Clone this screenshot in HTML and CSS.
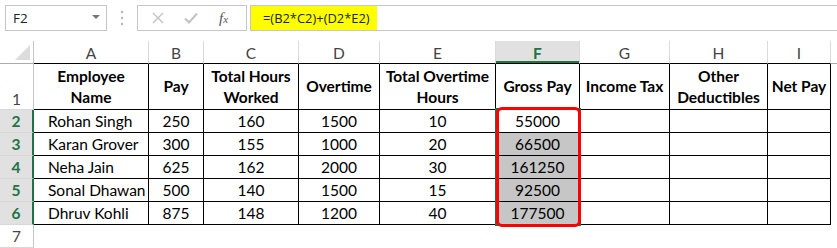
FILE: index.html
```html
<!DOCTYPE html>
<html>
<head>
<meta charset="utf-8">
<link rel="stylesheet" href="styles.css">
</head>
<body>
<div class="formula-bar">
  <div class="namebox"><span>F2</span><span class="caret"></span></div>
  <div class="grip">
    <svg width="4" height="16" viewBox="0 0 4 16"><circle cx="2" cy="2" r="1.2" fill="#b5b5b5"/><circle cx="2" cy="8" r="1.2" fill="#b5b5b5"/><circle cx="2" cy="14" r="1.2" fill="#b5b5b5"/></svg>
  </div>
  <div class="buttons">
    <svg class="btn-x" width="12" height="12" viewBox="0 0 12 12"><path d="M1 1 L11 11 M11 1 L1 11" stroke="#c2c2c2" stroke-width="1.4" fill="none"/></svg>
    <svg class="btn-ok" width="14" height="12" viewBox="0 0 14 12"><path d="M1 6.5 L5 10.5 L13 1.5" stroke="#c2c2c2" stroke-width="2" fill="none"/></svg>
    <span class="fx">f<span class="fx-x">x</span></span>
  </div>
  <div class="formula-input"><span class="formula">=(B2*C2)+(D2*E2)</span></div>
</div>

<div class="sheet-wrap">
<div class="sheet">
  <div class="corner"><span class="tri"></span></div>
  <div class="ch">A</div><div class="ch">B</div><div class="ch">C</div><div class="ch">D</div><div class="ch">E</div><div class="ch sel">F</div><div class="ch">G</div><div class="ch">H</div><div class="ch">I</div><div class="ch out"></div>

  <div class="rh r1">1</div>
  <div class="c h">Employee<br>Name</div><div class="c h">Pay</div><div class="c h">Total Hours<br>Worked</div><div class="c h">Overtime</div><div class="c h">Total Overtime<br>Hours</div><div class="c h">Gross Pay</div><div class="c h">Income Tax</div><div class="c h">Other<br>Deductibles</div><div class="c h">Net Pay</div><div class="e"></div>

  <div class="rh sel">2</div>
  <div class="c l">Rohan Singh</div><div class="c">250</div><div class="c">160</div><div class="c">1500</div><div class="c">10</div><div class="c">55000</div><div class="c"></div><div class="c"></div><div class="c"></div><div class="e"></div>

  <div class="rh sel">3</div>
  <div class="c l">Karan Grover</div><div class="c">300</div><div class="c">155</div><div class="c">1000</div><div class="c">20</div><div class="c shade">66500</div><div class="c"></div><div class="c"></div><div class="c"></div><div class="e"></div>

  <div class="rh sel">4</div>
  <div class="c l">Neha Jain</div><div class="c">625</div><div class="c">162</div><div class="c">2000</div><div class="c">30</div><div class="c shade">161250</div><div class="c"></div><div class="c"></div><div class="c"></div><div class="e"></div>

  <div class="rh sel">5</div>
  <div class="c l">Sonal Dhawan</div><div class="c">500</div><div class="c">140</div><div class="c">1500</div><div class="c">15</div><div class="c shade">92500</div><div class="c"></div><div class="c"></div><div class="c"></div><div class="e"></div>

  <div class="rh sel">6</div>
  <div class="c l">Dhruv Kohli</div><div class="c">875</div><div class="c">148</div><div class="c">1200</div><div class="c">40</div><div class="c shade">177500</div><div class="c"></div><div class="c"></div><div class="c"></div><div class="e"></div>

  <div class="rh">7</div>
  <div class="e"></div><div class="e"></div><div class="e"></div><div class="e"></div><div class="e"></div><div class="e"></div><div class="e"></div><div class="e"></div><div class="e"></div><div class="e"></div>
</div>
<div class="selection"></div>
<div class="highlight"></div>
</div>
</body>
</html>
```

FILE: styles.css
```css
* { box-sizing: border-box; }
html, body { margin: 0; padding: 0; background: #fff; }
body {
  width: 837px;
  height: 248px;
  overflow: hidden;
  font-family: Lato, "Open Sans", sans-serif;
  font-size: 15.5px;
  color: #000;
}

/* formula bar */
.formula-bar {
  display: flex;
  height: 26px;
  margin-top: 5px;
}
.namebox {
  margin-left: 5px;
  width: 102px;
  border: 1px solid #c6c6c6;
  display: flex;
  align-items: center;
  justify-content: space-between;
  padding: 0 6px 0 7px;
  font-family: "Open Sans", sans-serif;
  font-size: 13.5px;
  color: #222;
}
.caret {
  width: 0; height: 0;
  border-left: 4px solid transparent;
  border-right: 4px solid transparent;
  border-top: 4px solid #777;
  margin-bottom: 2px;
}
.grip {
  width: 30px;
  display: flex;
  align-items: center;
  justify-content: center;
}
.buttons {
  width: 110px;
  border: 1px solid #c6c6c6;
  display: flex;
  align-items: center;
  padding-left: 14px;
}
.btn-x { margin-right: 20px; }
.btn-ok { margin-right: 21px; }
.fx {
  font-family: "Liberation Serif", serif;
  font-style: italic;
  font-size: 15px;
  color: #555;
}
.fx-x { font-size: 11px; }
.formula-input {
  flex: 1;
  margin-left: 3px;
  border: 1px solid #c6c6c6;
  border-right: none;
  display: flex;
  align-items: stretch;
}
.formula {
  background: #ffff00;
  width: 126px;
  padding: 0 0 0 12px;
  display: flex;
  align-items: center;
  font-family: "Open Sans", sans-serif;
  font-size: 12.9px;
  color: #222;
}

/* sheet */
.sheet-wrap {
  position: relative;
  margin-top: 10px;
}
.sheet {
  display: grid;
  grid-template-columns: 34px 115px 55px 95px 81px 116px 84px 90px 98px 63px 1fr;
  grid-template-rows: 23px 46px 23px 23px 23px 23px 23px 23px;
}
.corner {
  position: relative;
  border-right: 1px solid #c6c6c6;
  border-bottom: 1px solid #ababab;
}
.tri {
  position: absolute;
  right: 3px;
  bottom: 3px;
  width: 0; height: 0;
  border-left: 15px solid transparent;
  border-bottom: 15px solid #dcdcdc;
}
.ch {
  border-right: 1px solid #dadada;
  border-bottom: 1px solid #000;
  display: flex;
  align-items: center;
  justify-content: center;
  color: #444;
  padding-top: 1px;
}
.ch.out { border-bottom-color: #ababab; border-right: none; }
.ch.sel {
  background: #e1e1e1;
  color: #217346;
  font-weight: bold;
  box-shadow: inset 0 -2px 0 #217346;
}
.rh {
  border-right: 1px solid #c6c6c6;
  border-bottom: 1px solid #d8d8d8;
  display: flex;
  align-items: center;
  justify-content: center;
  color: #444;
}
.rh.r1 { align-items: flex-end; padding-bottom: 1px; }
.rh.sel {
  background: #e1e1e1;
  color: #217346;
  font-weight: bold;
  border-right: 2px solid #217346;
}
.c {
  border-right: 1px solid #000;
  border-bottom: 1px solid #000;
  display: flex;
  align-items: center;
  justify-content: center;
  text-align: center;
  white-space: nowrap;
}
.c.h {
  font-weight: bold;
  line-height: 21px;
}
.c.l {
  justify-content: flex-start;
  padding-left: 14px;
}
.c.shade { background: #c6c6c6; }

.selection {
  position: absolute;
  left: 495px;
  top: 67px;
  width: 86px;
  height: 118px;
  border: 2px solid #217346;
}
.highlight {
  position: absolute;
  left: 496px;
  top: 66px;
  width: 85px;
  height: 120px;
  border: 3px solid #ff0000;
  border-radius: 6px;
}
```
